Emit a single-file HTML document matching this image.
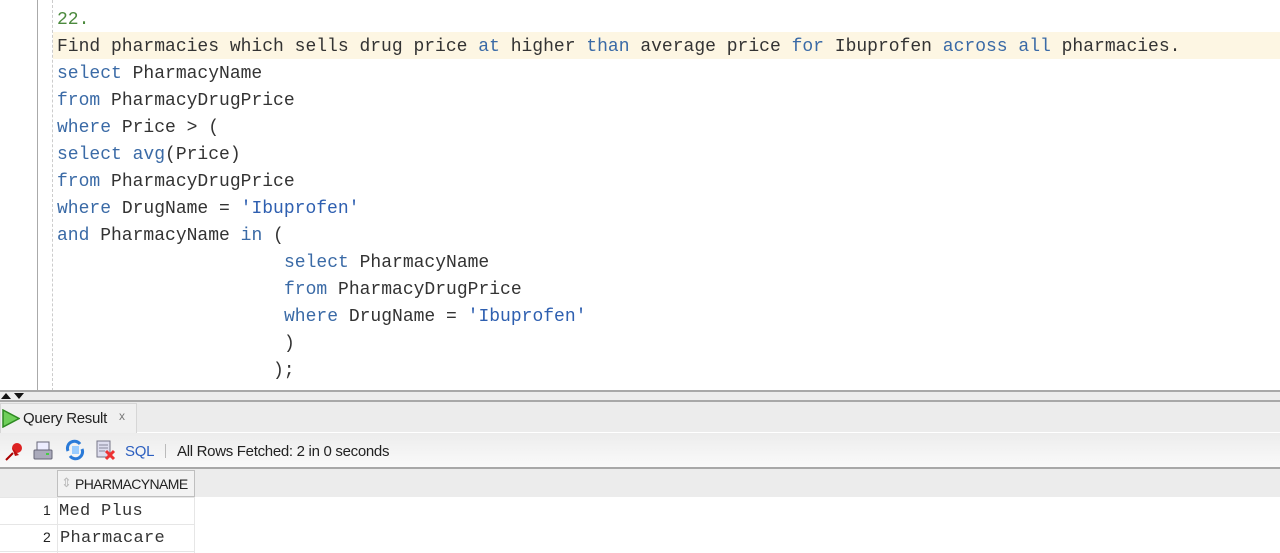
<!DOCTYPE html>
<html><head><meta charset="utf-8"><style>
*{margin:0;padding:0;box-sizing:border-box}
body{width:1280px;height:553px;overflow:hidden;background:#fff;font-family:"Liberation Sans",sans-serif;position:relative}
.ed{position:absolute;left:0;top:0;width:1280px;height:391px;background:#fff}
.g1{position:absolute;left:37px;top:0;width:1px;height:391px;background:#aaa}
.g2{position:absolute;left:52px;top:0;width:0;height:391px;border-left:1px dashed #ccc}
.hl{position:absolute;left:53px;top:32px;width:1227px;height:27px;background:#fdf6e3}
.ln{position:absolute;font-family:"Liberation Mono",monospace;font-size:18px;color:#333;white-space:pre;line-height:27px}
.k{color:#3a6aa6}
.n{color:#4c8a3e}
.s{color:#2e5fb0}
.ui{position:absolute;font-size:15px;color:#222;letter-spacing:-0.3px}
</style></head><body>
<div class="ed"></div>
<div class="g1"></div><div class="g2"></div>
<div class="hl"></div>
<div class="ln" style="left:57px;top:7px"><span class="n">22.</span></div>
<div class="ln" style="left:57px;top:34px">Find pharmacies which sells drug price <span class="k">at</span> higher <span class="k">than</span> average price <span class="k">for</span> Ibuprofen <span class="k">across</span> <span class="k">all</span> pharmacies.</div>
<div class="ln" style="left:57px;top:61px"><span class="k">select</span> PharmacyName</div>
<div class="ln" style="left:57px;top:88px"><span class="k">from</span> PharmacyDrugPrice</div>
<div class="ln" style="left:57px;top:115px"><span class="k">where</span> Price &gt; (</div>
<div class="ln" style="left:57px;top:142px"><span class="k">select</span> <span class="k">avg</span>(Price)</div>
<div class="ln" style="left:57px;top:169px"><span class="k">from</span> PharmacyDrugPrice</div>
<div class="ln" style="left:57px;top:196px"><span class="k">where</span> DrugName = <span class="s">'Ibuprofen'</span></div>
<div class="ln" style="left:57px;top:223px"><span class="k">and</span> PharmacyName <span class="k">in</span> (</div>
<div class="ln" style="left:284px;top:250px"><span class="k">select</span> PharmacyName</div>
<div class="ln" style="left:284px;top:277px"><span class="k">from</span> PharmacyDrugPrice</div>
<div class="ln" style="left:284px;top:304px"><span class="k">where</span> DrugName = <span class="s">'Ibuprofen'</span></div>
<div class="ln" style="left:284px;top:331px">)</div>
<div class="ln" style="left:273px;top:358px">);</div>

<div style="position:absolute;left:0;top:390px;width:1280px;height:2px;background:#a8a8a8"></div>
<div style="position:absolute;left:0;top:392px;width:1280px;height:8px;background:#ececec"></div>
<svg style="position:absolute;left:0;top:392px" width="30" height="8"><path d="M1 7 L6 1 L11 7Z M14 1 L24 1 L19 7Z" fill="#111"/></svg>
<div style="position:absolute;left:0;top:400px;width:1280px;height:2px;background:#a8a8a8"></div>
<div style="position:absolute;left:0;top:402px;width:1280px;height:30px;background:#ececec"></div>
<div style="position:absolute;left:0;top:403px;width:137px;height:31px;background:#f0f0f0;border:1px solid #d6d6d6;border-bottom:none"></div>
<svg style="position:absolute;left:2px;top:409px" width="18" height="19"><path d="M1 1 L17 9.5 L1 18 Z" fill="#6fcf5a" stroke="#2e8a22" stroke-width="1.5"/></svg>
<div class="ui" style="left:23px;top:410px">Query Result</div>
<div class="ui" style="left:119px;top:409px;font-size:12px;color:#777">x</div>
<div style="position:absolute;left:0;top:433px;width:1280px;height:35px;background:linear-gradient(#ececec,#fafafa)"></div>
<svg style="position:absolute;left:3px;top:440px" width="22" height="22"><circle cx="14" cy="8" r="5" fill="#d22"/><path d="M9 8 L16 15 L12 16 Z" fill="#b11"/><path d="M10 13 L3 20" stroke="#a00" stroke-width="2"/></svg>
<svg style="position:absolute;left:32px;top:440px" width="22" height="22"><rect x="5" y="2" width="12" height="9" fill="#eef" stroke="#667"/><rect x="2" y="10" width="18" height="9" rx="1" fill="#aab" stroke="#667"/><rect x="14" y="13" width="3" height="2" fill="#4c4"/></svg>
<svg style="position:absolute;left:64px;top:439px" width="22" height="22"><path d="M4 12 A7 7 0 0 1 16 5" stroke="#2a7ad8" stroke-width="3" fill="none"/><path d="M18 10 A7 7 0 0 1 6 17" stroke="#2a7ad8" stroke-width="3" fill="none"/><rect x="8" y="7" width="7" height="8" fill="#9cf"/></svg>
<svg style="position:absolute;left:95px;top:439px" width="22" height="22"><rect x="2" y="2" width="13" height="16" fill="#dde" stroke="#778"/><path d="M4 6h9M4 9h9M4 12h6" stroke="#889"/><path d="M11 12 L19 20 M19 12 L11 20" stroke="#e33" stroke-width="3"/></svg>
<div class="ui" style="left:125px;top:443px;color:#2c5fc0">SQL</div>
<div style="position:absolute;left:165px;top:444px;width:1px;height:14px;background:#bbb"></div>
<div class="ui" style="left:177px;top:443px">All Rows Fetched: 2 in 0 seconds</div>
<div style="position:absolute;left:0;top:467px;width:1280px;height:2px;background:#a8a8a8"></div>
<div style="position:absolute;left:0;top:469px;width:1280px;height:28px;background:#ececec"></div>
<div style="position:absolute;left:57px;top:470px;width:138px;height:27px;background:#f2f2f2;border:1px solid #bfbfbf"></div>
<div class="ui" style="left:61px;top:475px;font-size:13px;color:#bbb">⇕</div>
<div class="ui" style="left:75px;top:476px;font-size:14px;letter-spacing:-0.6px">PHARMACYNAME</div>
<div style="position:absolute;left:0;top:497px;width:195px;height:1px;background:#e6e6e6"></div>
<div style="position:absolute;left:0;top:524px;width:195px;height:1px;background:#e6e6e6"></div>
<div style="position:absolute;left:0;top:551px;width:195px;height:1px;background:#e6e6e6"></div>
<div style="position:absolute;left:57px;top:497px;width:1px;height:56px;background:#e6e6e6"></div>
<div style="position:absolute;left:194px;top:497px;width:1px;height:56px;background:#e6e6e6"></div>
<div class="ui" style="left:43px;top:502px;font-size:14px">1</div>
<div class="ui" style="left:43px;top:529px;font-size:14px">2</div>
<div class="ln" style="left:59px;top:498px;font-size:17px;letter-spacing:0.3px">Med Plus</div>
<div class="ln" style="left:60px;top:525px;font-size:17px;letter-spacing:0.3px">Pharmacare</div>
</body></html>
